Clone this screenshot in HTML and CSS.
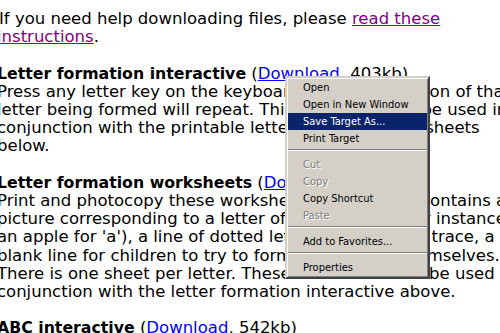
FILE: index.html
```html
<!DOCTYPE html>
<html>
<head>
<meta charset="utf-8">
<link rel="stylesheet" href="styles.css">
</head>
<body>
<p class="intro">If you need help downloading files, please <a class="visited" href="#">read these<br>instructions</a>.</p>

<p><b>Letter formation interactive</b> (<a href="#">Download</a>, 403kb)<br>
Press any letter key on the keyboard and an animation of that<br>
letter being formed will repeat. This animation can be used in<br>
conjunction with the printable letter formation worksheets<br>
below.</p>

<p><b>Letter formation worksheets</b> (<a href="#">Download</a>, 1.2Mb)<br>
Print and photocopy these worksheets. Each sheet contains a<br>
picture corresponding to a letter of the alphabet (for instance<br>
an apple for 'a'), a line of dotted letters for pupils to trace, a<br>
blank line for children to try to form their letters themselves.<br>
There is one sheet per letter. These sheets can also be used in<br>
conjunction with the letter formation interactive above.</p>

<p><b>ABC interactive</b> (<a href="#">Download</a>, 542kb)</p>

<div class="menu">
  <div class="item">Open</div>
  <div class="item">Open in New Window</div>
  <div class="item active">Save Target As...</div>
  <div class="item">Print Target</div>
  <div class="sep"></div>
  <div class="item disabled">Cut</div>
  <div class="item disabled">Copy</div>
  <div class="item">Copy Shortcut</div>
  <div class="item disabled">Paste</div>
  <div class="sep"></div>
  <div class="item">Add to Favorites...</div>
  <div class="sep"></div>
  <div class="item">Properties</div>
</div>
</body>
</html>
```

FILE: styles.css
```css
html, body {
  overflow: hidden;
}
body {
  margin: 0 0 0 -3px;
  padding-top: 10px;
  background: #fff;
  color: #000;
  font-family: "DejaVu Sans", Verdana, sans-serif;
  font-size: 16.5px;
  line-height: 18.2px;
  white-space: nowrap;
}
p {
  margin: 0 0 18.2px 0;
}
b {
  font-size: 15.75px;
}
.intro {
  text-indent: 2px;
}
a {
  color: #0000ff;
  text-decoration: underline;
}
a.visited {
  color: #800080;
}
.menu {
  position: absolute;
  left: 285px;
  top: 76px;
  width: 139px;
  padding: 1px;
  background: #d4d0c8;
  border: 2px solid;
  border-color: #d4d0c8 #404040 #404040 #d4d0c8;
  box-shadow: inset 1px 1px 0 #fff, inset -1px -1px 0 #808080;
  font-family: "DejaVu Sans Condensed", "DejaVu Sans", sans-serif;
  font-size: 11px;
  line-height: 17px;
  color: #000;
}
.item {
  height: 17px;
  padding-left: 15px;
}
.item.active {
  background: #0a246a;
  color: #fff;
}
.item.disabled {
  color: #808080;
  text-shadow: 1px 1px 0 #fff;
}
.sep {
  height: 0;
  margin: 2px 0 5px;
  border-top: 1px solid #808080;
  border-bottom: 1px solid #fff;
}
```
